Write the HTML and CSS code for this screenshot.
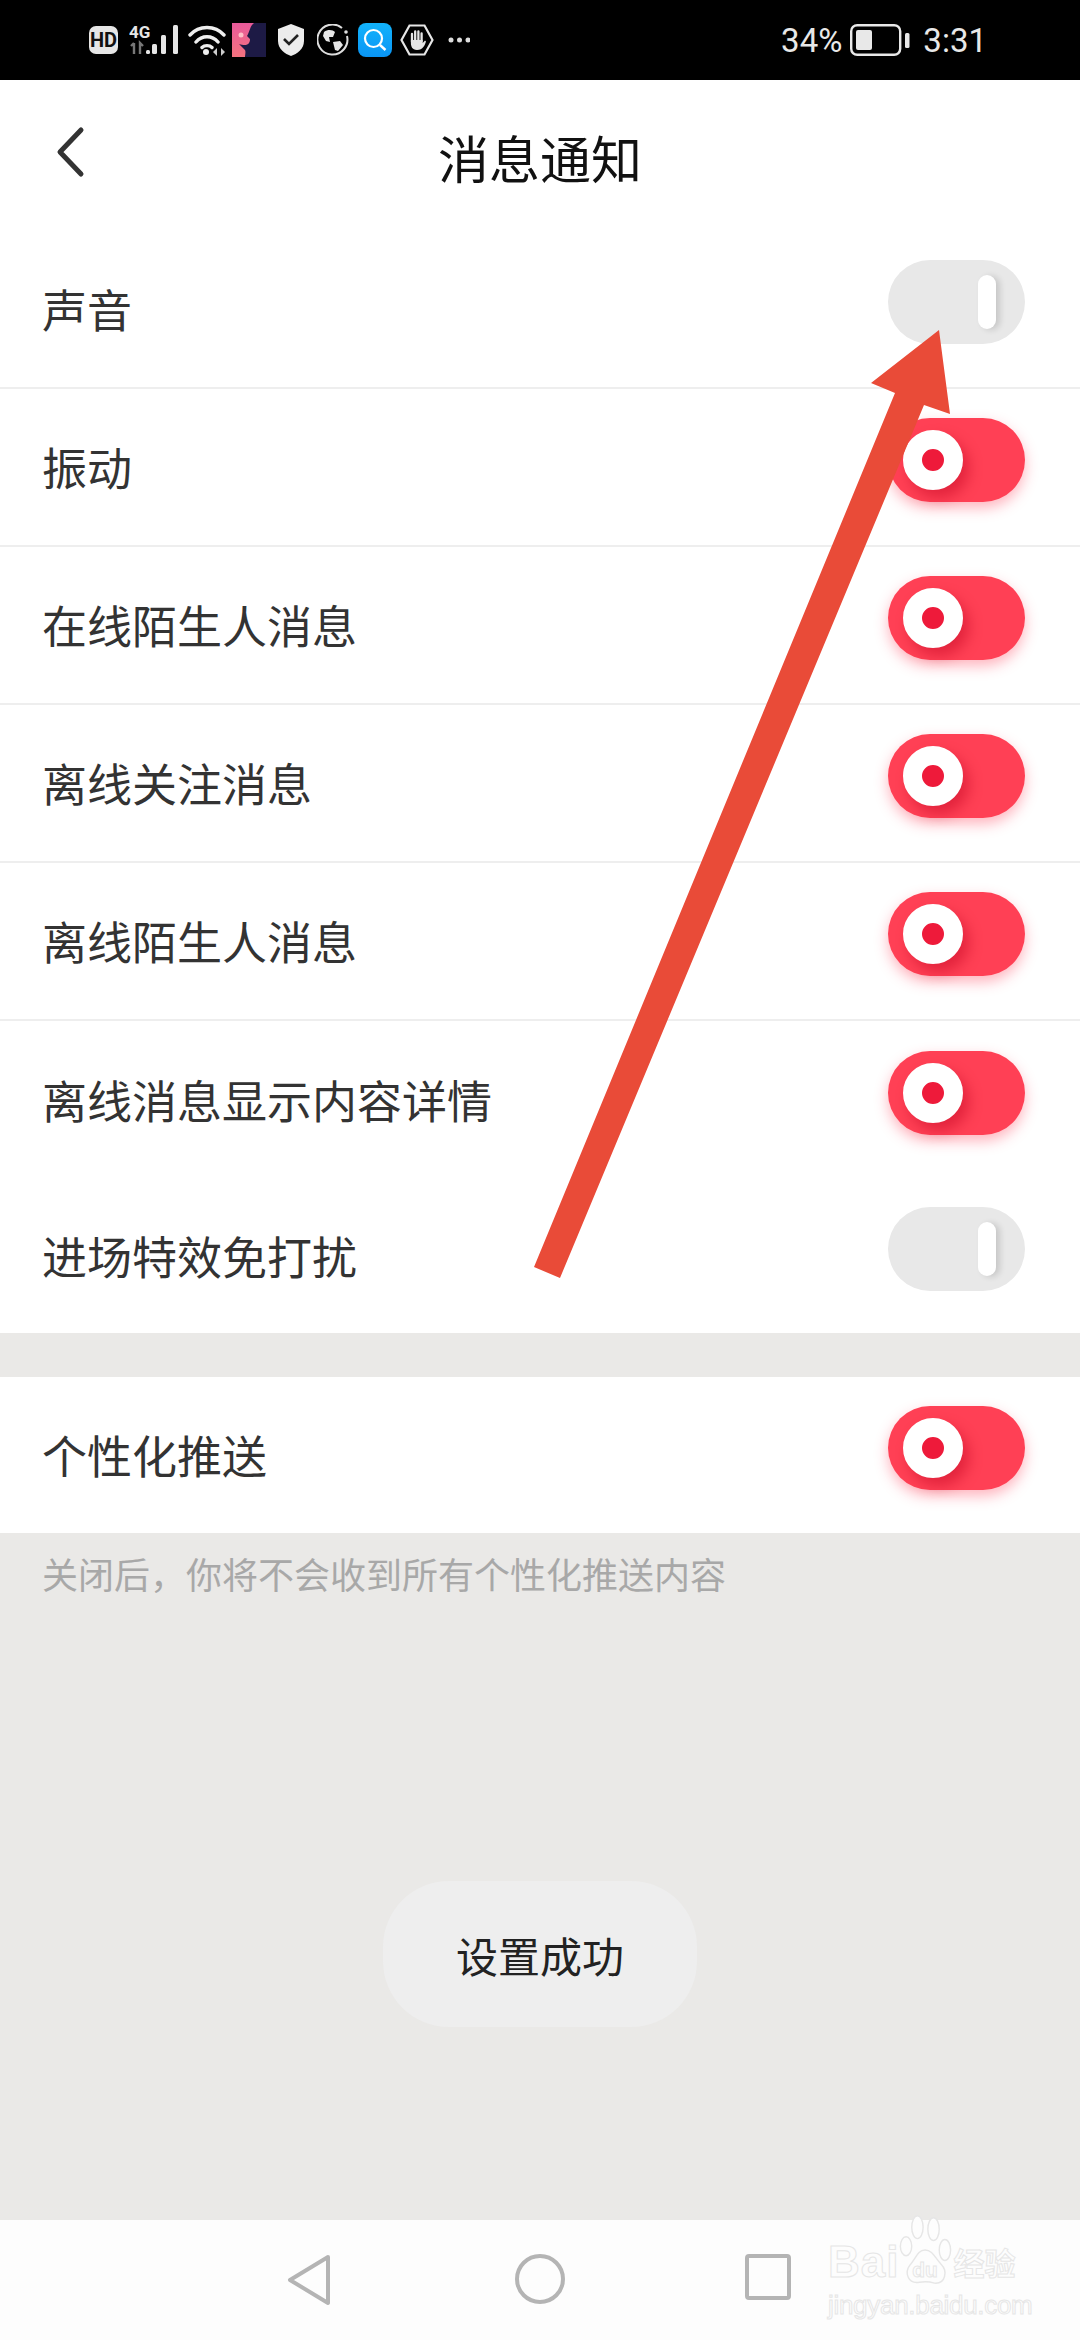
FILE: index.html
```html
<!DOCTYPE html>
<html>
<head>
  <meta charset="utf-8">
  <title>消息通知</title>
  <link rel="stylesheet" href="styles.css">
</head>
<body>
  <div class="phone">
    <div class="statusbar">
      <div class="status-left">
        <svg class="ic-hd" width="29" height="28" viewBox="0 0 29 28"><rect width="29" height="28" rx="7" fill="#e6e6e6"/><text x="14.5" y="20.5" text-anchor="middle" class="hd-text">HD</text></svg>
        <svg class="ic-signal" width="50" height="38" viewBox="0 -8 50 38">
          <text x="0" y="13" class="g-text">4G</text>
          <path d="M5 18v11M2 21l3-3M11 29V18l3 3" stroke="#777" stroke-width="2.400" fill="none"/>
          <rect x="17" y="25" width="4" height="4" rx="1.500" fill="#e6e6e6"/>
          <rect x="23" y="19" width="5" height="10" rx="1.500" fill="#e6e6e6"/>
          <rect x="32" y="10" width="5" height="19" rx="1.500" fill="#e6e6e6"/>
          <rect x="44" y="0" width="5" height="29" rx="1.500" fill="#e6e6e6"/>
        </svg>
        <svg class="ic-wifi" width="38" height="32" viewBox="0 0 38 32">
          <path d="M2 11C11 1 27 1 36 11M8 18C14 11 24 11 30 18M14 23.500C16.500 21 21.500 21 24 23.500" stroke="#eee" stroke-width="3.400" fill="none" stroke-linecap="round"/>
          <circle cx="18" cy="28" r="3" fill="#eee"/>
          <path d="M25 28l4-4v8zM33 24l4 4-4 4z" fill="#ccc"/>
        </svg>
        <svg class="ic-pic" width="34" height="34" viewBox="0 0 34 34">
          <defs><linearGradient id="pk" x1="0" y1="0" x2="0" y2="1"><stop offset="0" stop-color="#e85a9a"/><stop offset="1" stop-color="#f5737f"/></linearGradient></defs>
          <rect width="34" height="34" fill="url(#pk)"/>
          <path d="M34 0H22C18 3 18 8 15 13L18 16C18 20 16 24 7 21L13 27C14 29 13 32 13 34H34Z" fill="#1d1a45"/>
          <circle cx="9" cy="12" r="2.500" fill="#ffc0c8"/>
        </svg>
        <svg class="ic-shield" width="26" height="32" viewBox="0 0 26 32">
          <path d="M13 0L26 5V17C26 25 19 30 13 32C7 30 0 25 0 17V5Z" fill="#ececec"/>
          <path d="M6 15l5 5 9-9" stroke="#222" stroke-width="2.600" fill="none"/>
        </svg>
        <svg class="ic-globe" width="32" height="32" viewBox="0 0 32 32">
          <path d="M25 4A15 15 0 1 0 30 12" stroke="#ddd" stroke-width="2" fill="none"/>
          <circle cx="29" cy="8" r="1.800" fill="#ddd"/>
          <path d="M7 8C11 5 16 6 18 8L16 13L12 13L13 18L9 17L6 12ZM16 18L23 17L26 21L21 27L18 26Z" fill="#e6e6e6"/>
        </svg>
        <svg class="ic-search" width="34" height="34" viewBox="0 0 34 34">
          <defs><linearGradient id="bl" x1="0" y1="0" x2="0" y2="1"><stop offset="0" stop-color="#12b3fb"/><stop offset="1" stop-color="#0a95f5"/></linearGradient></defs>
          <rect width="34" height="34" rx="8" fill="url(#bl)"/>
          <circle cx="15.500" cy="15.500" r="8.500" stroke="#fff" stroke-width="2.200" fill="none"/>
          <path d="M22 22l5.500 5" stroke="#fff" stroke-width="2.400"/>
        </svg>
        <svg class="ic-hand" width="34" height="32" viewBox="0 0 34 32">
          <path d="M9.500 1.500H24.500L32.500 16L24.500 30.500H9.500L1.500 16Z" stroke="#e6e6e6" stroke-width="2.200" fill="none"/>
          <path d="M12 18V10M15.200 16V7.500M18.400 16V7.500M21.600 17V9.500" stroke="#e6e6e6" stroke-width="2.300" stroke-linecap="round" fill="none"/>
          <path d="M10.900 16H22.700V19L25 16.500L26 17.500C25 21 23 26 17 26C12 26 10.900 22 10.900 19Z" fill="#e6e6e6"/>
        </svg>
        <svg class="ic-dots" width="22" height="6" viewBox="0 0 22 6"><circle cx="3" cy="3" r="2.500" fill="#ddd"/><circle cx="11.500" cy="3" r="2.500" fill="#ddd"/><circle cx="20" cy="3" r="2.500" fill="#ddd"/></svg>
      </div>
      <div class="status-right">
        <span class="pct">34%</span>
        <svg width="60" height="32" viewBox="0 0 60 32">
          <rect x="1.200" y="1.200" width="49" height="29.600" rx="6" stroke="#e8e8e8" stroke-width="2.400" fill="none"/>
          <rect x="6" y="6" width="16" height="20" rx="2" fill="#e8e8e8"/>
          <rect x="55" y="9" width="4.500" height="15" rx="1.500" fill="#e8e8e8"/>
        </svg>
        <span class="time">3:31</span>
      </div>
    </div>

    <div class="header">
      <svg class="back" width="30" height="52" viewBox="0 0 30 52"><path d="M26 4L5 26L26 48" stroke="#333" stroke-width="5" fill="none" stroke-linecap="round" stroke-linejoin="round"/></svg>
      <div class="title">消息通知</div>
    </div>

    <div class="section">
      <div class="row"><span class="label">声音</span><div class="switch off"><i></i></div></div>
      <div class="row"><span class="label">振动</span><div class="switch on"><i></i></div></div>
      <div class="row"><span class="label">在线陌生人消息</span><div class="switch on"><i></i></div></div>
      <div class="row"><span class="label">离线关注消息</span><div class="switch on"><i></i></div></div>
      <div class="row"><span class="label">离线陌生人消息</span><div class="switch on"><i></i></div></div>
      <div class="row no-line"><span class="label">离线消息显示内容详情</span><div class="switch on"><i></i></div></div>
      <div class="row no-line short"><span class="label">进场特效免打扰</span><div class="switch off"><i></i></div></div>
    </div>

    <div class="section second">
      <div class="row no-line single"><span class="label">个性化推送</span><div class="switch on"><i></i></div></div>
    </div>
    <div class="note">关闭后，你将不会收到所有个性化推送内容</div>

    <div class="navbar">
      <svg width="48" height="52" viewBox="0 0 48 52"><path d="M41 3L3 26L41 49Z" stroke="#b4b4b4" stroke-width="4" fill="none" stroke-linejoin="round"/></svg>
      <svg width="50" height="50" viewBox="0 0 50 50"><circle cx="25" cy="25" r="23" stroke="#b4b4b4" stroke-width="4" fill="none"/></svg>
      <svg width="46" height="46" viewBox="0 0 46 46"><rect x="2" y="2" width="42" height="42" rx="2" stroke="#b4b4b4" stroke-width="4" fill="none"/></svg>
    </div>

    <div class="toast">设置成功</div>

    <svg class="arrow" width="1080" height="2340" viewBox="0 0 1080 2340">
      <polygon points="939,330 950,414 924,405 560,1278 534,1267 895,393 871,383" fill="#e94b38"/>
    </svg>

    <div class="watermark">
      <div class="wm-top">
        <span class="wm-bai">Bai</span>
        <svg width="56" height="76" viewBox="0 0 56 76">
          <g stroke="#e6e6e6" stroke-width="1.500" fill="#fdfdfd">
            <ellipse cx="8" cy="34" rx="6" ry="10"/>
            <ellipse cx="20" cy="14" rx="6" ry="12"/>
            <ellipse cx="37" cy="16" rx="6" ry="12"/>
            <ellipse cx="49" cy="38" rx="6" ry="11"/>
            <path d="M28 38C20 38 18 48 12 54C6 62 10 74 22 72C28 71 32 71 38 73C50 74 52 60 45 53C39 47 36 38 28 38Z"/>
          </g>
          <text x="28" y="66" text-anchor="middle" class="wm-du">du</text>
        </svg>
        <span class="wm-cn">经验</span>
      </div>
      <div class="wm-url">jingyan.baidu.com</div>
    </div>
  </div>
</body>
</html>
```

FILE: styles.css
```css
body {
  margin: 0;
  background-color: #eae9e7;
  font-family: "Noto Sans CJK SC", "Noto Sans", sans-serif;
}
.phone {
  position: relative;
  width: 1080px;
  height: 2340px;
  overflow: hidden;
  display: flex;
  flex-direction: column;
  background-color: #eae9e7;
}

/* status bar */
.statusbar {
  height: 80px;
  flex: none;
  display: flex;
  justify-content: space-between;
  align-items: center;
  padding: 0 93px 0 89px;
  background-color: #000;
  box-sizing: border-box;
}
.status-left {
  display: flex;
  align-items: center;
}
.status-left svg {
  display: block;
  flex: none;
}
.ic-signal { margin-left: 11px; margin-top: -8px; }
.ic-wifi { margin-left: 9px; }
.ic-pic { margin-left: 6px; }
.ic-shield { margin-left: 12px; }
.ic-globe { margin-left: 13px; }
.ic-search { margin-left: 9px; }
.ic-hand { margin-left: 8px; }
.ic-dots { margin-left: 14px; }
.hd-text {
  font-family: Roboto, sans-serif;
  font-weight: 700;
  font-size: 20px;
  fill: #111;
}
.g-text {
  font-family: Roboto, sans-serif;
  font-weight: 700;
  font-size: 17px;
  fill: #e6e6e6;
}
.status-right {
  display: flex;
  align-items: center;
  color: #e8e8e8;
  font-family: Roboto, sans-serif;
  font-size: 33px;
}
.status-right svg {
  margin: 0 13px 0 8px;
}

/* title bar */
.header {
  height: 151px;
  flex: none;
  display: flex;
  justify-content: center;
  background-color: #fff;
}
.back {
  position: absolute;
  left: 55px;
  top: 126px;
}
.title {
  margin-top: 47px;
  font-size: 51px;
  line-height: 60px;
  color: #111;
}

/* rows */
.section {
  background-color: #fff;
}
.section.second {
  margin-top: 44px;
}
.row {
  height: 158px;
  box-sizing: border-box;
  display: flex;
  justify-content: space-between;
  align-items: center;
  padding: 0 55px 0 42px;
  border-bottom: 2px solid #eeeeee;
}
.row.no-line {
  border-bottom: none;
}
.row.short {
  height: 154px;
}
.row.single {
  height: 156px;
}
.label {
  font-size: 45px;
  line-height: 60px;
  color: #333;
}
.switch {
  width: 137px;
  height: 84px;
  margin-bottom: 14px;
  border-radius: 42px;
  display: flex;
  align-items: center;
  box-sizing: border-box;
}
.switch.on {
  padding-left: 15px;
  background-color: #ff4055;
  box-shadow: 0 6px 14px rgba(255, 40, 70, 0.35);
}
.switch.on i {
  width: 22px;
  height: 22px;
  border: 19px solid #fff;
  border-radius: 50%;
  background-color: #ee1a3a;
  box-shadow: 6px 8px 14px rgba(190, 0, 30, 0.45);
}
.switch.off {
  justify-content: flex-end;
  padding-right: 29px;
  background-color: #e8e8e8;
}
.switch.off i {
  width: 18px;
  height: 54px;
  border-radius: 9px;
  background-color: #fff;
  box-shadow: 4px 1px 6px rgba(0, 0, 0, 0.14);
}
.note {
  padding: 18px 42px 0;
  font-size: 36px;
  line-height: 44px;
  color: #a8a8a8;
}

/* bottom navigation */
.navbar {
  margin-top: auto;
  height: 120px;
  flex: none;
  box-sizing: border-box;
  display: flex;
  align-items: flex-start;
  padding: 34px 289px 0 287px;
  justify-content: space-between;
  background-color: #fdfdfd;
}

/* things lying over the page */
.toast {
  position: absolute;
  left: 383px;
  top: 1881px;
  width: 314px;
  height: 146px;
  border-radius: 66px;
  display: flex;
  align-items: center;
  justify-content: center;
  background-color: #eeeeee;
  font-size: 42px;
  color: #222;
}
.arrow {
  position: absolute;
  left: 0;
  top: 0;
}
.watermark {
  position: absolute;
  left: 828px;
  top: 2224px;
  width: 200px;
  color: transparent;
  -webkit-text-stroke: 1px #e6e6e6;
  font-family: "Liberation Sans", sans-serif;
  font-weight: 700;
}
.wm-top {
  display: flex;
  align-items: flex-end;
  height: 62px;
}
.wm-top svg {
  flex: none;
  margin: -14px 0 0 -2px;
  height: 72px;
}
.wm-bai {
  font-size: 44px;
  line-height: 48px;
  letter-spacing: 1px;
}
.wm-du {
  font-family: "Liberation Sans", sans-serif;
  font-size: 22px;
  fill: transparent;
  stroke: #e6e6e6;
  stroke-width: 1;
}
.wm-cn {
  font-family: "Noto Sans CJK SC", sans-serif;
  font-size: 31px;
  line-height: 48px;
  white-space: nowrap;
}
.wm-url {
  margin-top: 4px;
  font-size: 26px;
  line-height: 30px;
  font-weight: 400;
  white-space: nowrap;
  letter-spacing: -0.3px;
}
```
